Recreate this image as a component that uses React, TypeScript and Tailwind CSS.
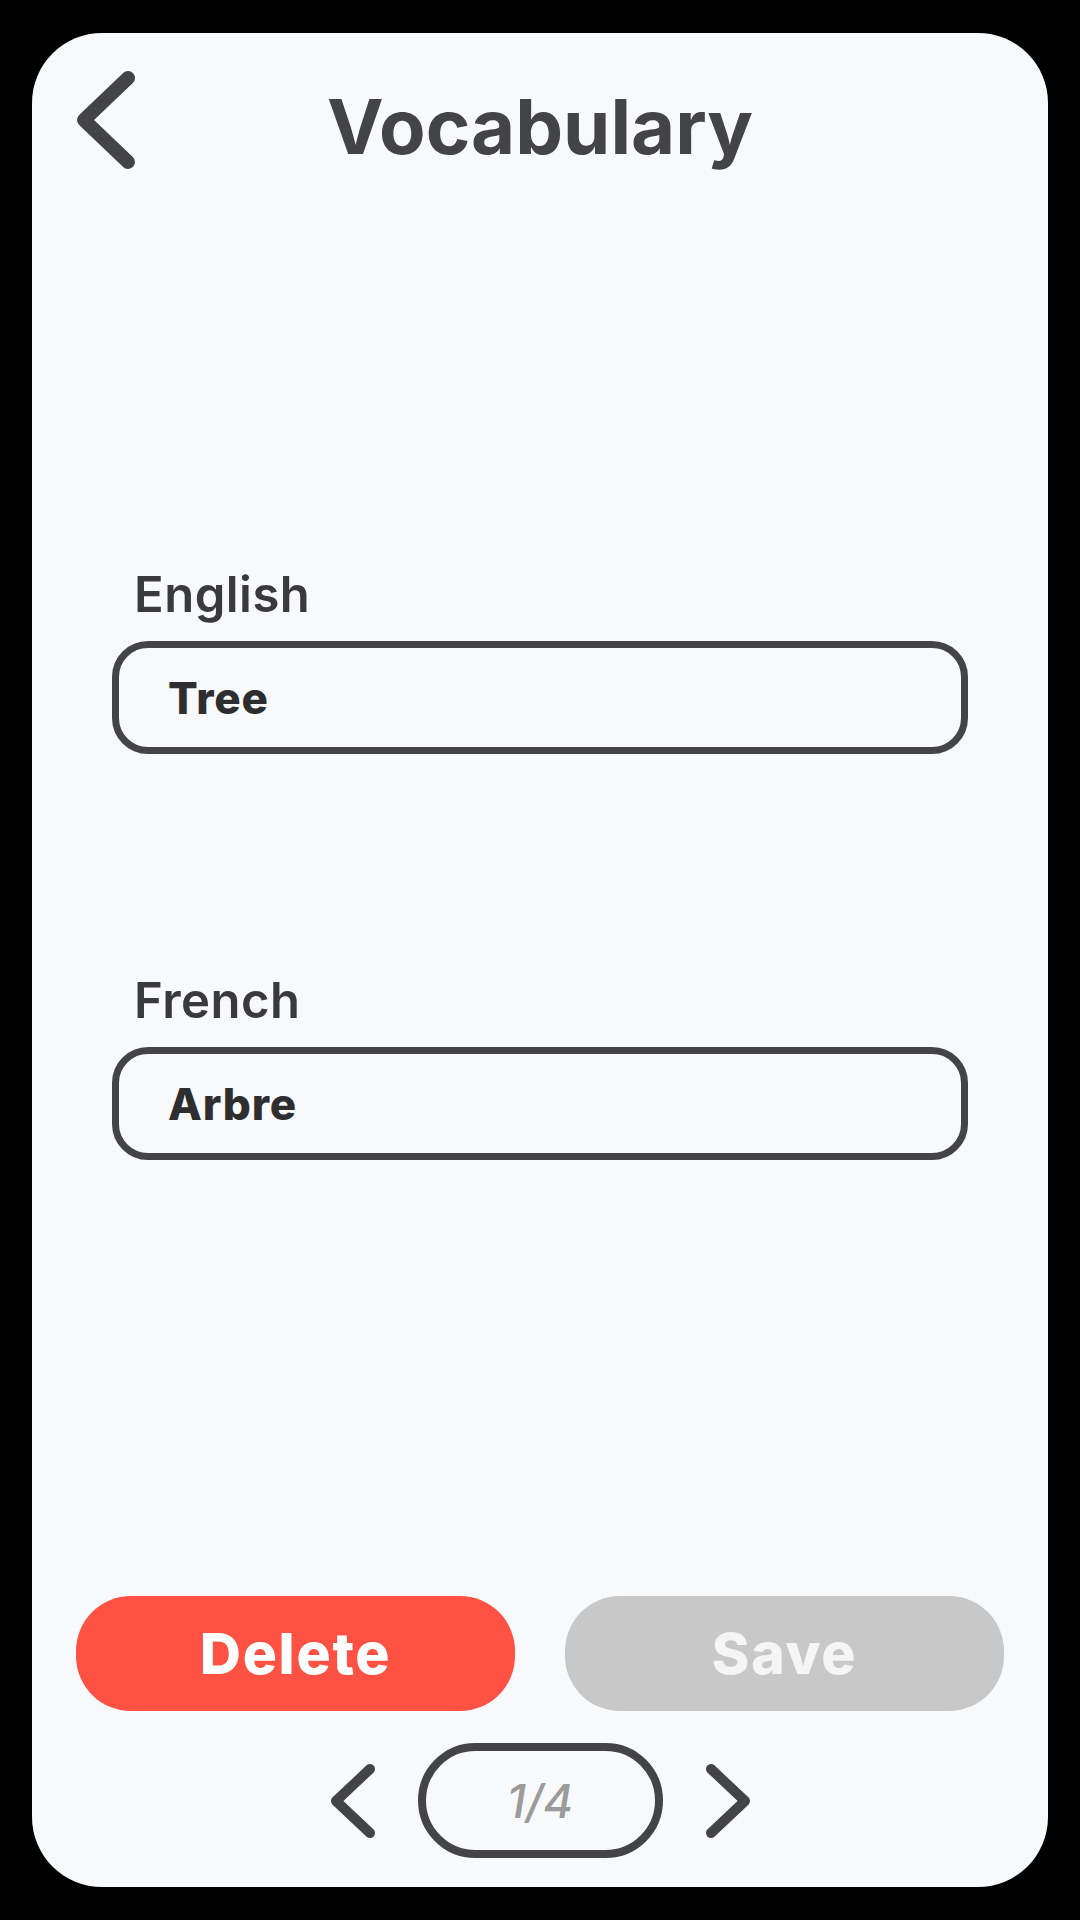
import React from "react";

const font = { fontFamily: "Inter, 'Noto Sans', sans-serif" };

function Field({ label, value, className }: { label: string; value: string; className?: string }) {
  return (
    <div className={"flex flex-col " + (className ?? "")}>
      <div className="ml-[22px] text-[49px] leading-none font-semibold tracking-[0.01em] text-[#3a3a3c]">{label}</div>
      <div className="mt-[22px] h-[113px] rounded-[36px] border-[7px] border-[#444446] flex items-center pl-[49px]">
        <span className="text-[44px] leading-none font-extrabold tracking-[0.02em] text-[#2e2e30]">{value}</span>
      </div>
    </div>
  );
}

export default function App() {
  return (
    <div className="w-[1080px] h-[1920px] bg-black pt-[33px] pb-[33px] px-[32px]" style={font}>
      <div className="h-full bg-[#f8f9fa] rounded-[70px] flex flex-col">
        <div className="grid grid-cols-[1fr_auto_1fr] items-start pt-[33px]">
          <svg className="ml-[32px]" width="80" height="110" viewBox="0 0 80 110" fill="none">
            <path d="M64 12 L20 54 L64 96" stroke="#444446" strokeWidth="14" strokeLinecap="round" strokeLinejoin="round" />
          </svg>
          <div className="mt-[22px] text-[76px] leading-none font-bold text-[#444446]">Vocabulary</div>
          <div />
        </div>

        <div className="px-[80px] flex flex-col">
          <Field label="English" value="Tree" className="mt-[394px]" />
          <Field label="French" value="Arbre" className="mt-[222px]" />
        </div>

        <div className="mt-auto px-[44px] flex gap-[50px]">
          <div className="flex-1 h-[115px] rounded-[55px] bg-[#ff5244] flex items-center justify-center">
            <span className="text-[57px] leading-none font-extrabold tracking-[0.03em] text-white">Delete</span>
          </div>
          <div className="flex-1 h-[115px] rounded-[55px] bg-[#c8c8c8] flex items-center justify-center">
            <span className="text-[57px] leading-none font-extrabold tracking-[0.03em] text-[#f5f5f5]">Save</span>
          </div>
        </div>

        <div className="mt-[32px] mb-[29px] flex items-center justify-center gap-[38px]">
          <svg width="56" height="80" viewBox="0 0 56 80" fill="none">
            <path d="M46 8 L12 40 L46 72" stroke="#444446" strokeWidth="10" strokeLinecap="round" strokeLinejoin="round" />
          </svg>
          <div className="w-[245px] h-[115px] rounded-full border-[8px] border-[#444446] flex items-center justify-center">
            <span className="text-[46px] leading-none font-medium italic text-[#9b9b9b]">1/4</span>
          </div>
          <svg width="56" height="80" viewBox="0 0 56 80" fill="none">
            <path d="M10 8 L44 40 L10 72" stroke="#444446" strokeWidth="10" strokeLinecap="round" strokeLinejoin="round" />
          </svg>
        </div>
      </div>
    </div>
  );
}
